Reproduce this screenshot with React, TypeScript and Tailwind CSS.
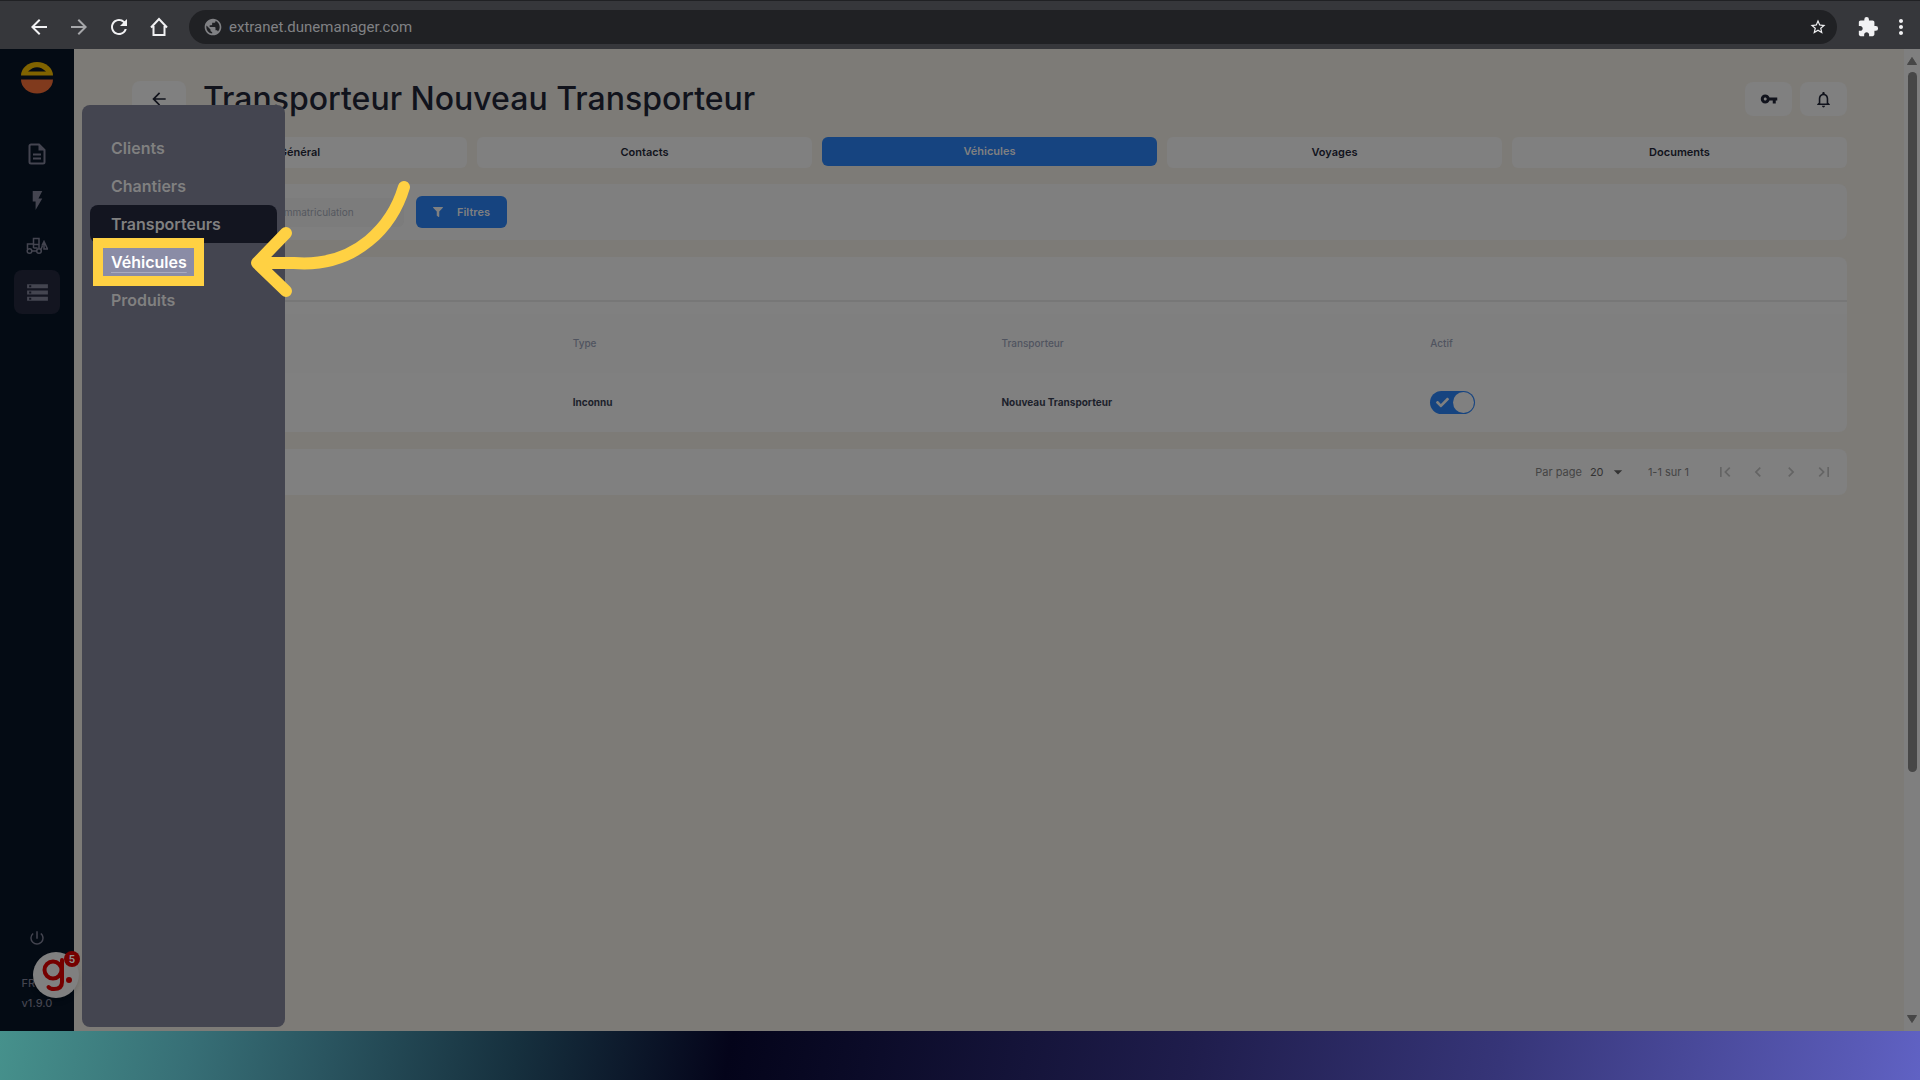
import React from 'react';
import {
  MdArrowBack,
  MdArrowForward,
  MdRefresh,
  MdPublic,
  MdStarBorder,
  MdExtension,
  MdMoreVert,
  MdVpnKey,
  MdNotificationsNone,
  MdStorage,
  MdPowerSettingsNew,
  MdFirstPage,
  MdLastPage,
  MdChevronLeft,
  MdChevronRight,
  MdFlashOn,
  MdArrowDropDown,
} from 'react-icons/md';
import { FaCheck, FaFilter } from 'react-icons/fa';

const tabs = ['Général', 'Contacts', 'Véhicules', 'Voyages', 'Documents'];
const menu = ['Clients', 'Chantiers', 'Transporteurs', 'Véhicules', 'Produits'];

function BrowserBar() {
  return (
    <header className="flex h-[49px] shrink-0 items-center border-t border-[#202124] bg-[#36373b] pl-[27px] pr-[7px] pt-1 text-[#f1f1f3]">
      <nav className="flex shrink-0 items-center gap-4">
        <button aria-label="Back"><MdArrowBack size={24} /></button>
        <button aria-label="Forward" className="text-[#a6a7aa]"><MdArrowForward size={24} /></button>
        <button aria-label="Reload"><MdRefresh size={24} /></button>
        <button aria-label="Home">
          <svg width="24" height="24" viewBox="0 0 24 24" fill="none" stroke="currentColor" strokeWidth="2">
            <path d="M4 12.500 12 4l8 8.500M6.500 11v9h11v-9" strokeLinejoin="miter" />
          </svg>
        </button>
      </nav>
      <div className="ml-[18px] flex h-[34px] min-w-0 flex-1 items-center rounded-full bg-[#202124] pl-3.5 pr-2.5">
        <MdPublic size={20} className="shrink-0 text-[#808184]" />
        <input
          aria-label="Address"
          defaultValue="extranet.dunemanager.com"
          className="ml-1.5 min-w-0 flex-1 bg-transparent font-[Roboto,sans-serif] text-[15px] text-[#808184] outline-none"
        />
        <button aria-label="Bookmark"><MdStarBorder size={18} /></button>
      </div>
      <button aria-label="Extensions" className="ml-5"><MdExtension size={22} /></button>
      <button aria-label="More" className="ml-2.5"><MdMoreVert size={24} /></button>
    </header>
  );
}

function LoaderIcon() {
  return (
    <svg width="22" height="18" viewBox="0 0 22 18" fill="none" stroke="currentColor" strokeWidth="1.500">
      <circle cx="3.500" cy="14" r="2.300" />
      <circle cx="13" cy="14" r="2.300" />
      <path d="M6 14h4.500M1.500 12V7h6M7.500 11V1.500h5.500V11M7.500 7.500H13M7.500 11h4M15 12.500l1.500-4" />
      <path d="M18 4.500v7.500h3.500L18 4.500l-2 4" />
    </svg>
  );
}

function Sidebar() {
  return (
    <aside className="relative flex w-[74px] shrink-0 flex-col items-center bg-[#040b14] text-[#444550]">
      <svg width="32" height="32" viewBox="0 0 32 32" className="mt-[13px] shrink-0">
        <path d="M0 13.500a16 13.500 0 0 1 32 0z" fill="#806300" />
        <path d="M7 9.500q9-8.500 18 0z" fill="#040b14" />
        <path d="M0 17.500h32a16 14 0 0 1-32 0z" fill="#803a1d" />
      </svg>
      <nav className="mt-[38px] flex flex-col items-center gap-0.5">
        <a href="#documents" aria-label="Documents" className="flex h-11 w-[46px] items-center justify-center">
          <svg width="18" height="22" viewBox="0 0 18 22" fill="none" stroke="currentColor" strokeWidth="2">
            <path d="M3 1.500h8l5.500 5.500v12a1.500 1.500 0 0 1-1.500 1.500H3A1.500 1.500 0 0 1 1.500 19V3A1.500 1.500 0 0 1 3 1.500zM5 11.500h8M5 15.500h8" />
            <path d="M10.500 1.500V7.500h6z" fill="currentColor" stroke="none" />
          </svg>
        </a>
        <a href="#express" aria-label="Express" className="flex h-11 w-[46px] items-center justify-center">
          <MdFlashOn size={23} />
        </a>
        <a href="#engins" aria-label="Engins" className="flex h-11 w-[46px] items-center justify-center">
          <LoaderIcon />
        </a>
        <a href="#donnees" aria-label="Données" className="flex h-11 w-[46px] items-center justify-center rounded-lg bg-[#131520]">
          <MdStorage size={25} />
        </a>
      </nav>
      <div className="mt-auto flex flex-col items-center pb-[18px] font-medium">
        <button aria-label="Déconnexion" className="mb-[26px]"><MdPowerSettingsNew size={18} /></button>
        <span className="self-start text-[11px] leading-5">FR</span>
        <span className="text-[11px] leading-5">v1.9.0</span>
      </div>
      <button aria-label="Aide" className="absolute bottom-[33px] left-[33px] z-20 h-[46px] w-[46px] rounded-full bg-[#808080] shadow-md">
        <svg width="46" height="46" viewBox="0 0 46 46" fill="none" stroke="#750000" strokeWidth="4">
          <circle cx="20" cy="18" r="8.500" />
          <path d="M29 8v22q0 7-8 7-4 0-5.500-2" strokeLinecap="round" />
          <circle cx="36" cy="28" r="3" fill="#750000" stroke="none" />
        </svg>
        <span className="absolute -top-px right-[-1px] flex h-4 w-4 items-center justify-center rounded-full bg-[#750000] text-[10px] font-bold text-[#909090]">5</span>
      </button>
    </aside>
  );
}

function Flyout() {
  return (
    <nav className="absolute bottom-1 left-[82px] top-14 z-10 w-[203px] rounded-lg bg-[#444550] px-2 pt-6">
      {menu.map((item) => (
        <a
          key={item}
          href={'#' + item}
          className={
            'relative flex h-[38px] items-center rounded-lg px-[21px] text-base font-semibold ' +
            (item === 'Transporteurs' ? 'bg-[#131520] text-[#808080]' : item === 'Véhicules' ? 'text-white' : 'text-[#808080]')
          }
        >
          {item === 'Véhicules' && (
            <span className="absolute -top-[5px] left-[3px] h-12 w-[111px] border-[10px] border-[#ffd143] bg-[#8a8ca6]" />
          )}
          <span className={item === 'Véhicules' ? 'relative underline decoration-[#a9abc0] decoration-1 underline-offset-4' : 'relative'}>
            {item}
          </span>
        </a>
      ))}
      <svg width="170" height="124" viewBox="0 0 170 124" className="absolute left-[164px] top-[72px]" fill="none" stroke="#ffd143" strokeWidth="12" strokeLinecap="round" strokeLinejoin="round">
        <path d="M158 10C147 47 112 91 48 86L12 86M40 56 11 86l29 28" />
      </svg>
    </nav>
  );
}

function VehicleTable() {
  return (
    <section className="mt-[17px] rounded-lg bg-[#808080] pt-[43px]">
      <div className="h-0.5 bg-[#777777]" />
      <table className="mt-3 w-full table-fixed text-left text-[10px]">
        <thead className="text-[#50545f]">
          <tr className="h-[59px] bg-[#7f7f7f]">
            <th className="px-3 font-medium">Immatriculation</th>
            <th className="px-3 font-medium">Type</th>
            <th className="px-3 font-medium">Transporteur</th>
            <th className="px-3 font-medium">Actif</th>
          </tr>
        </thead>
        <tbody className="font-bold text-[#1c1f2b]">
          <tr className="h-[59px]">
            <td className="px-3" />
            <td className="px-3">Inconnu</td>
            <td className="px-3">Nouveau Transporteur</td>
            <td className="px-3">
              <label className="relative flex h-[23px] w-[45px] items-center justify-between rounded-full bg-[#164480] pl-1.5 pr-px">
                <input type="checkbox" defaultChecked aria-label="Actif" className="absolute inset-0 opacity-0" />
                <FaCheck size={13} className="text-[#808080]" />
                <span className="h-[21px] w-[21px] rounded-full bg-[#808080]" />
              </label>
            </td>
          </tr>
        </tbody>
      </table>
    </section>
  );
}

function Pagination() {
  return (
    <footer className="mt-[17px] flex h-[46px] items-center justify-end rounded-lg bg-[#808080] pr-[13px] text-[11px] text-[#444444]">
      <label htmlFor="per-page">Par page</label>
      <div className="relative ml-2 flex items-center">
        <select id="per-page" defaultValue="20" className="w-[38px] appearance-none bg-transparent text-[#333333]">
          <option>20</option>
        </select>
        <MdArrowDropDown size={20} className="pointer-events-none absolute right-0 text-[#333333]" />
      </div>
      <span className="ml-5">1-1 sur 1</span>
      <div className="ml-[26px] flex items-center gap-[13px] text-[#646464]">
        <button aria-label="Première page"><MdFirstPage size={20} /></button>
        <button aria-label="Page précédente"><MdChevronLeft size={20} /></button>
        <button aria-label="Page suivante"><MdChevronRight size={20} /></button>
        <button aria-label="Dernière page"><MdLastPage size={20} /></button>
      </div>
    </footer>
  );
}

function ScrollBar() {
  return (
    <div className="flex w-4 shrink-0 flex-col items-center bg-[#7f7f7f] py-2">
      <svg width="10" height="8" viewBox="0 0 10 8" fill="#474747"><path d="M5 0.500 9.500 7.500h-9z" stroke="#474747" strokeLinejoin="round" /></svg>
      <div className="mt-[7px] w-[9px] grow-[701] rounded-full bg-[#474747]" />
      <div className="grow-[243]" />
      <svg width="10" height="8" viewBox="0 0 10 8" fill="#474747"><path d="M5 7.500 9.500 0.500h-9z" stroke="#474747" strokeLinejoin="round" /></svg>
    </div>
  );
}

export default function App() {
  return (
    <div className="flex min-h-screen flex-col bg-[#7d7b77] font-[Inter,sans-serif] text-[#11131c]">
      <BrowserBar />
      <div className="relative flex flex-1">
        <Sidebar />
        <Flyout />
        <main className="min-w-0 flex-1 pl-[58px] pr-[57px] pt-8">
          <div className="flex items-center">
            <button aria-label="Retour" className="flex h-9 w-[54px] items-center justify-center rounded-lg bg-[#808080]">
              <MdArrowBack size={20} />
            </button>
            <h1 className="ml-[17px] text-[32px] font-medium leading-9">Transporteur Nouveau Transporteur</h1>
            <div className="ml-auto flex gap-2">
              <button aria-label="Accès" className="flex h-[34px] w-[47px] items-center justify-center rounded-lg bg-[#808080]"><MdVpnKey size={18} /></button>
              <button aria-label="Notifications" className="flex h-[34px] w-[47px] items-center justify-center rounded-lg bg-[#808080]"><MdNotificationsNone size={19} /></button>
            </div>
          </div>
          <nav className="mt-5 grid h-[31px] grid-cols-5 items-start gap-2.5 text-[11px] font-semibold">
            {tabs.map((tab) => (
              <button
                key={tab}
                className={
                  tab === 'Véhicules'
                    ? 'h-[29px] rounded-md bg-[#164480] text-[#808080]'
                    : 'h-[31px] rounded-md bg-[#808080]'
                }
              >
                {tab}
              </button>
            ))}
          </nav>
          <section className="mt-4 flex h-14 items-center gap-3 rounded-lg bg-[#7f7f7f] pl-3">
            <input
              aria-label="Immatriculation"
              placeholder="Immatriculation"
              className="h-[29px] w-[260px] rounded-md bg-[#7c7c7c] pl-[137px] text-[10px] placeholder:text-[#55585f]"
            />
            <button className="flex h-8 w-[91px] items-center justify-center gap-3.5 rounded-md bg-[#164480] text-[11px] font-semibold text-[#808080]">
              <FaFilter size={10} />
              Filtres
            </button>
          </section>
          <VehicleTable />
          <Pagination />
        </main>
        <ScrollBar />
      </div>
      <div className="h-[49px] shrink-0 bg-[linear-gradient(100deg,#46918c_0%,#376f76_10%,#2a5560_17%,#16303e_27%,#04041a_38%,#0b0b28_45%,#1f1d4c_62%,#363578_78%,#5a5bb8_97%,#6062c4_100%)]" />
    </div>
  );
}
